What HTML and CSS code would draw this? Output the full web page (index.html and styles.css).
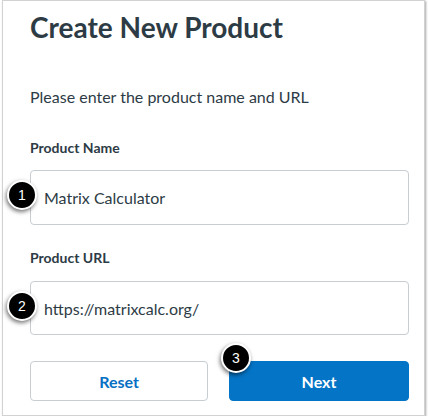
FILE: index.html
```html
<!DOCTYPE html>
<html>
<head>
<meta charset="utf-8">
<link rel="stylesheet" href="styles.css">
</head>
<body>
<div class="card">
  <h1 class="title">Create New Product</h1>
  <p class="intro">Please enter the product name and URL</p>
  <div class="label label-name">Product Name</div>
  <div class="field field-name">
    <div class="input">Matrix Calculator</div>
    <span class="badge badge-1">1</span>
  </div>
  <div class="label label-url">Product URL</div>
  <div class="field field-url">
    <div class="input input-url">https://matrixcalc.org/</div>
    <span class="badge badge-2">2</span>
  </div>
  <div class="actions">
    <button class="btn btn-reset">Reset</button>
    <div class="next-wrap">
      <button class="btn btn-next">Next</button>
      <span class="badge badge-3">3</span>
    </div>
  </div>
</div>
</body>
</html>
```
FILE: styles.css
```css
html, body {
  margin: 0;
  padding: 0;
  background: #ffffff;
}
body {
  font-family: Lato, "Liberation Sans", sans-serif;
  color: #2d3b45;
}
.card {
  margin-left: 2px;
  width: 423px;
  box-sizing: border-box;
  height: 416px;
  border: 1px solid #d2d2d2;
  box-shadow: 1px 1px 2px rgba(0, 0, 0, 0.35);
  padding: 9px 15px 0 27px;
  background: #fff;
}
.title {
  margin: 0;
  font-size: 28px;
  line-height: 34px;
  font-weight: 700;
  color: #2d3b45;
}
.intro {
  margin: 43px 0 0;
  font-size: 16px;
  line-height: 20px;
}
.label {
  font-size: 14px;
  line-height: 18px;
  font-weight: 700;
}
.label-name {
  margin-top: 32px;
}
.label-url {
  margin-top: 24px;
}
.field {
  position: relative;
}
.field-name {
  margin-top: 13px;
}
.field-url {
  margin-top: 14px;
}
.input {
  box-sizing: border-box;
  height: 55px;
  border: 1px solid #c7cdd1;
  border-radius: 4px;
  padding: 0 13px;
  display: flex;
  align-items: center;
  font-size: 16px;
  color: #2d3b45;
}
.input-url {
  height: 54px;
}
.badge {
  position: absolute;
  width: 26px;
  height: 26px;
  border: 2px solid #fff;
  border-radius: 50%;
  background: #000;
  color: #fff;
  font-family: "Liberation Sans", Arial, sans-serif;
  font-size: 14px;
  line-height: 26px;
  text-align: center;
  box-shadow: -1px 2px 4px rgba(0, 0, 0, 0.55);
}
.badge-1 {
  left: -23px;
  top: 10px;
}
.badge-2 {
  left: -23px;
  top: 10px;
}
.actions {
  margin-top: 26px;
  display: flex;
  gap: 21px;
}
.btn {
  box-sizing: border-box;
  width: 179px;
  height: 40px;
  border-radius: 4px;
  font-family: Lato, "Liberation Sans", sans-serif;
  font-size: 16px;
  font-weight: 700;
  cursor: pointer;
}
.btn-reset {
  background: #fff;
  border: 1px solid #c7cdd1;
  color: #0770c4;
}
.next-wrap {
  position: relative;
}
.btn-next {
  width: 180px;
  background: #0474c6;
  border: 1px solid #0474c6;
  color: #fff;
}
.badge-3 {
  left: -8px;
  top: -18px;
}
```
